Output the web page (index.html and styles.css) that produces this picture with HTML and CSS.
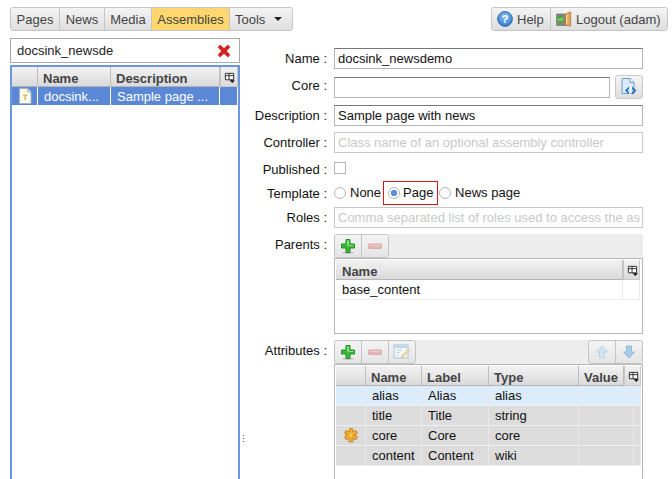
FILE: index.html
```html
<!DOCTYPE html>
<html lang="en">
<head>
<meta charset="utf-8">
<title>Assemblies</title>
<link rel="stylesheet" href="styles.css">
</head>
<body>
<svg class="defs" width="0" height="0" aria-hidden="true">
  <defs>
    <symbol id="plus" viewBox="0 0 16 16">
      <ellipse cx="8" cy="14.800" rx="6" ry="1.100" fill="#c4c4c4"/>
      <path d="M6 1.500h4v4.500h4.500v4H10v4.500H6V10H1.500V6H6z" fill="#3cb83c" stroke="#1f8f2c" stroke-width="1"/>
      <path d="M7 2.500h2v4.500h4.500v1H8v-1H7z" fill="#8fe07f"/>
    </symbol>
    <symbol id="minus" viewBox="0 0 16 16">
      <rect x="1.500" y="6" width="13" height="4.500" rx=".5" fill="#e3b4b6" stroke="#dcaeb0"/>
      <rect x="2.500" y="7" width="11" height="1" fill="#eecdce"/>
    </symbol>
    <symbol id="cols" viewBox="0 0 12 12">
      <path d="M1.500 1.500h9v7h-9zM1.500 4h9M5.500 1.500v7" fill="#fff" stroke="#222" stroke-width="1"/>
      <path d="M6 9h6l-3 3z" fill="#111"/>
    </symbol>
  </defs>
</svg>

<header class="topbar">
  <nav class="btn-group">
    <a class="tb-btn tab-pages">Pages</a>
    <a class="tb-btn tab-news">News</a>
    <a class="tb-btn tab-media">Media</a>
    <a class="tb-btn tab-assemblies active">Assemblies</a>
    <a class="tb-btn tab-tools">Tools <span class="caret"></span></a>
  </nav>
  <div class="btn-group">
    <a class="tb-btn tab-help">
      <svg viewBox="0 0 18 18" width="16" height="16">
        <defs><radialGradient id="helpfill" cx="50%" cy="35%" r="70%"><stop offset="0" stop-color="#8cc4f2"/><stop offset="1" stop-color="#2b74c9"/></radialGradient></defs>
        <circle cx="9" cy="9" r="8.300" fill="url(#helpfill)" stroke="#2364ab"/>
        <text class="qmark" x="9" y="14" text-anchor="middle">?</text>
      </svg>
      Help
    </a>
    <a class="tb-btn tab-logout">
      <svg viewBox="0 0 18 18" width="16" height="16">
        <rect x="1" y="3.500" width="10" height="12.500" fill="#8a8a80" stroke="#66665c"/>
        <path d="M10.500 3.500l6-2.500v16l-6-1z" fill="#e4a65a" stroke="#a86f2c" stroke-width=".8"/>
        <path d="M12 4v11" stroke="#f6d59a" stroke-width="1.500"/>
        <path d="M1 7.500h4V5l4.500 4.500L5 14v-2.500H1z" fill="#6fcf5a" stroke="#2f8f2c" stroke-width=".8"/>
      </svg>
      Logout (adam)
    </a>
  </div>
</header>

<main class="main">
  <aside class="side">
    <div class="search">
      <span class="search-text">docsink_newsde</span>
      <svg class="clear" viewBox="0 0 14 14" width="14" height="14">
        <path d="M1 3.200 3.200 1 7 4.600 10.800 1 13 3.200 9.400 7 13 10.800 10.800 13 7 9.400 3.200 13 1 10.800 4.600 7z" fill="#d8211c" stroke="#a81c16" stroke-width=".6"/>
      </svg>
    </div>
    <div class="list">
      <div class="list-head">
        <div class="hcell c-icon"></div>
        <div class="hcell c-name">Name</div>
        <div class="hcell c-desc">Description</div>
        <div class="hcell c-menu"><svg class="menu-ico"><use href="#cols"/></svg></div>
      </div>
      <div class="list-row">
        <div class="cell c-icon">
          <svg viewBox="0 0 14 16" width="14" height="16">
            <path d="M1.500.5h8l3.500 3.500v11.500h-11.500z" fill="#fbfbee" stroke="#a9b2bd"/>
            <path d="M9.500.5v3.500H13" fill="#e8ecf0" stroke="#a9b2bd"/>
            <path d="M5 6.500h4.500v1.200H8v4.300H6.500V7.700H5z" fill="#c4bd55"/>
          </svg>
        </div>
        <div class="cell c-name">docsink...</div>
        <div class="cell c-desc">Sample page ...</div>
        <div class="cell c-menu"></div>
      </div>
    </div>
  </aside>

  <div class="splitter">⋮</div>

  <form class="form">
    <div class="row r-name">
      <label class="lbl">Name :</label>
      <div class="input">docsink_newsdemo</div>
    </div>
    <div class="row r-core">
      <label class="lbl">Core :</label>
      <div class="input grow"></div>
      <a class="core-btn">
        <svg viewBox="0 0 18 18" width="18" height="18">
          <path d="M2 .5h8l4 4v11H2z" fill="#d9ebfa" stroke="#6f9cc8"/>
          <path d="M10 .5v4h4" fill="#f4f9fd" stroke="#6f9cc8"/>
          <path d="M9 8.500 5 12.500l4 4V14l-1.500-1.500L9 11zM12 8.500l4.500 4-4.500 4V14l1.500-1.500L12 11z" fill="#2472c0"/>
          <path d="M11.500 8.500 9.500 16.500" stroke="#fff" stroke-width="1"/>
        </svg>
      </a>
    </div>
    <div class="row r-desc">
      <label class="lbl">Description :</label>
      <div class="input">Sample page with news</div>
    </div>
    <div class="row r-ctrl">
      <label class="lbl">Controller :</label>
      <div class="input placeholder">Class name of an optional assembly controller</div>
    </div>
    <div class="row r-pub">
      <label class="lbl">Published :</label>
      <span class="check"></span>
    </div>
    <div class="row r-tpl">
      <label class="lbl">Template :</label>
      <div class="radios">
        <span class="radio-item"><span class="radio"></span>None</span>
        <span class="radio-item selected"><span class="radio on"></span>Page</span>
        <span class="radio-item last"><span class="radio"></span>News page</span>
      </div>
    </div>
    <div class="row r-roles">
      <label class="lbl">Roles :</label>
      <div class="input placeholder">Comma separated list of roles used to access the as</div>
    </div>
    <div class="row r-parents">
      <label class="lbl lbl-top">Parents :</label>
      <div class="field">
        <div class="toolbar">
          <div class="icon-group">
            <a class="icon-btn"><svg width="16" height="16"><use href="#plus"/></svg></a>
            <a class="icon-btn"><svg width="16" height="16"><use href="#minus"/></svg></a>
          </div>
        </div>
        <div class="grid grid-parents">
          <div class="grid-head">
            <div class="hcell p-name">Name</div>
            <div class="hcell p-menu"><svg class="menu-ico"><use href="#cols"/></svg></div>
          </div>
          <div class="grid-row plain">
            <div class="cell p-name">base_content</div>
            <div class="cell p-menu"></div>
          </div>
        </div>
      </div>
    </div>
    <div class="row r-attrs">
      <label class="lbl lbl-top">Attributes :</label>
      <div class="field">
        <div class="toolbar between">
          <div class="icon-group">
            <a class="icon-btn"><svg width="16" height="16"><use href="#plus"/></svg></a>
            <a class="icon-btn"><svg width="16" height="16"><use href="#minus"/></svg></a>
            <a class="icon-btn">
              <svg viewBox="0 0 18 18" width="18" height="18">
                <rect x="1" y="2" width="14" height="13" fill="#f2f7fb" stroke="#a9c3da"/>
                <rect x="1.500" y="2.500" width="13" height="2.500" fill="#bfd8ee"/>
                <path d="M3 7h6M3 9.500h4M3 12h3" stroke="#c5d3de"/>
                <path d="M15.500 6 17 7.500 10.500 14 8 15l1-2.500z" fill="#f1d9a4" stroke="#d4b98a" stroke-width=".6"/>
              </svg>
            </a>
          </div>
          <div class="icon-group">
            <a class="icon-btn">
              <svg viewBox="0 0 16 16" width="16" height="16"><path d="M8 2l5.500 6H10.500v6h-5V8H2.500z" fill="#d2e3f1" stroke="#bcd3e6"/></svg>
            </a>
            <a class="icon-btn">
              <svg viewBox="0 0 16 16" width="16" height="16"><path d="M5.500 2h5v6h3L8 14 2.500 8h3z" fill="#a9cbe8" stroke="#93bbdd"/></svg>
            </a>
          </div>
        </div>
        <div class="grid grid-attrs">
          <div class="attr-head">
            <div class="hcell"></div>
            <div class="hcell">Name</div>
            <div class="hcell">Label</div>
            <div class="hcell">Type</div>
            <div class="hcell">Value</div>
            <div class="hcell a-menu"><svg class="menu-ico"><use href="#cols"/></svg></div>
          </div>
          <div class="attr-row hilite">
            <div class="cell"></div><div class="cell">alias</div><div class="cell">Alias</div><div class="cell">alias</div><div class="cell"></div><div class="cell"></div>
          </div>
          <div class="attr-row">
            <div class="cell"></div><div class="cell">title</div><div class="cell">Title</div><div class="cell">string</div><div class="cell"></div><div class="cell"></div>
          </div>
          <div class="attr-row">
            <div class="cell cell-star">
              <svg viewBox="0 0 14 15" width="14" height="15">
                <ellipse cx="7" cy="13.800" rx="4.500" ry="1" fill="#c2c2c2"/>
                <g stroke-linecap="round">
                  <path d="M7 2v10M2.700 4.500l8.600 5M2.700 9.500l8.600-5" stroke="#c97e14" stroke-width="4.400"/>
                  <path d="M7 2v10M2.700 4.500l8.600 5M2.700 9.500l8.600-5" stroke="#f2ab33" stroke-width="3"/>
                </g>
                <circle cx="7" cy="7" r="1.500" fill="#f9d27c"/>
              </svg>
            </div>
            <div class="cell">core</div><div class="cell">Core</div><div class="cell">core</div><div class="cell"></div><div class="cell"></div>
          </div>
          <div class="attr-row">
            <div class="cell"></div><div class="cell">content</div><div class="cell">Content</div><div class="cell">wiki</div><div class="cell"></div><div class="cell"></div>
          </div>
        </div>
      </div>
    </div>
  </form>
</main>
</body>
</html>
```
FILE: styles.css
```css
* { box-sizing: border-box; }
html, body { margin: 0; height: 479px; overflow: hidden; }
body {
  padding: 7px 4px 0 10px;
  background: #fff;
  color: #111;
  font: 13px/15px "Liberation Sans", Arial, sans-serif;
}
.defs { position: absolute; }

.topbar { display: flex; justify-content: space-between; height: 24px; }
.btn-group {
  display: flex;
  border: 1px solid #c4c4c4;
  border-radius: 3px;
  overflow: hidden;
}
.tb-btn {
  display: flex;
  align-items: center;
  justify-content: center;
  color: #444;
  background: linear-gradient(#f4f4f4, #dedede);
  border-left: 1px solid #c4c4c4;
}
.tb-btn:first-child { border-left: 0; }
.tab-pages { width: 48px; }
.tab-news { width: 45px; }
.tab-media { width: 47px; }
.tab-assemblies { width: 78px; }
.tab-tools { width: 63px; justify-content: flex-start; padding-left: 5px; }
.tab-help { width: 58px; gap: 4px; justify-content: flex-start; padding-left: 5px; }
.tab-logout { width: 117px; gap: 4px; justify-content: flex-start; padding-left: 5px; }
.active { background: #ffd76e; }
.caret {
  width: 0; height: 0;
  margin-left: 9px;
  border: 4px solid transparent;
  border-top: 4px solid #222;
  border-bottom: 0;
}
.qmark { font: bold 13px "Liberation Sans", sans-serif; fill: #fff; }

.main { display: flex; margin-top: 7px; }
.side { width: 230px; flex: none; }
.search {
  display: flex;
  align-items: center;
  justify-content: space-between;
  height: 25px;
  padding: 0 8px 0 6px;
  border: 1px solid #aaa;
  color: #222;
}
.list {
  height: 416px;
  margin-top: 2px;
  border: 2px solid #6c96e0;
  border-bottom: 0;
}
.list-head, .list-row { display: grid; grid-template-columns: 26px 73px 109px 18px; }
.list-head { height: 20px; }
.list-row { height: 19px; background: #5b88d6; color: #fff; }

.hcell {
  display: flex;
  align-items: center;
  padding: 3px 0 0 5px;
  background: linear-gradient(#f2f2f2, #dadada);
  border-right: 1px solid #bdbdbd;
  border-bottom: 1px solid #b4b4b4;
  color: #444;
  font-weight: bold;
}
.hcell.p-name { padding-left: 6px; }
.cell {
  display: flex;
  align-items: center;
  padding-left: 6px;
  border-right: 1px solid #e8e8e8;
  white-space: nowrap;
}
.list-row .cell { border-right-color: #fff; border-bottom: 1px solid #fff; }
.hcell.c-menu, .hcell.p-menu, .hcell.a-menu {
  justify-content: center;
  padding: 2px 0 0 1px;
  border-left: 1px solid #c8c8c8;
  border-right-color: #c8c8c8;
  border-bottom-color: #c8c8c8;
}
.menu-ico { width: 11px; height: 11px; }
.list-row .c-icon { justify-content: center; padding: 0; }

.splitter {
  width: 10px;
  flex: none;
  padding-top: 397px;
  font-size: 9px;
  line-height: 9px;
  color: #333;
  text-indent: -1px;
}

.form { width: 393px; padding-top: 10px; }
.row { display: flex; align-items: center; }
.lbl { width: 77px; margin-right: 7px; flex: none; text-align: right; color: #111; padding-bottom: 1px; }
.lbl-top { align-self: flex-start; margin-top: 3px; }
.r-core .lbl { margin-bottom: 3px; }
.r-pub .lbl { margin-top: 3px; }
.r-tpl .lbl { margin-top: 1px; }
.input {
  width: 309px;
  height: 21px;
  padding: 2px 3px;
  border: 1px solid #b5b5b5;
  border-top-color: #777;
  color: #111;
  line-height: 16px;
  white-space: nowrap;
  overflow: hidden;
}
.input.grow { width: 276px; }
.placeholder { color: #c8c8c8; border-color: #c8c8c8; }
.core-btn {
  display: flex;
  align-items: center;
  justify-content: center;
  width: 28px;
  height: 24px;
  margin-left: 5px;
  border: 1px solid #c8c8c8;
  border-radius: 3px;
  background: linear-gradient(#f4f4f4, #dedede);
}
.r-core { margin-top: 6px; height: 24px; }
.r-desc { margin-top: 6px; }
.r-ctrl { margin-top: 6px; }
.r-pub { margin-top: 6px; height: 18px; }
.r-tpl { margin-top: 4px; height: 24px; }
.r-roles { margin-top: 2px; }
.r-parents { margin-top: 6px; align-items: flex-start; height: 100px; }
.r-attrs { margin-top: 6px; align-items: flex-start; }

.check { width: 12px; height: 12px; border: 1px solid #b5b5b5; }
.radios { display: flex; align-items: center; height: 24px; }
.radio-item { display: flex; align-items: center; height: 24px; gap: 4px; padding-bottom: 1px; }
.radio-item.selected { width: 55px; margin-left: 2px; padding-left: 4px; gap: 3px; border: 1px solid #d81818; }
.radio-item.last { margin-left: 1px; }
.radio {
  width: 12px; height: 12px;
  border: 1px solid #b5b5b5;
  border-radius: 50%;
  background: #fff;
}
.radio.on { background: radial-gradient(circle, #5f8fe0 0 3px, #fff 3.500px); }

.field { width: 309px; }
.toolbar { display: flex; height: 24px; background: #ededed; }
.between { justify-content: space-between; }
.icon-group {
  display: flex;
  border: 1px solid #c4c4c4;
  border-radius: 3px;
  overflow: hidden;
}
.icon-btn {
  display: flex;
  align-items: center;
  justify-content: center;
  width: 27px;
  background: linear-gradient(#f4f4f4, #e4e4e4);
  border-left: 1px solid #c4c4c4;
}
.icon-btn:first-child { border-left: 0; width: 26px; }

.grid { border: 1px solid #b5b5b5; padding: 1px; }
.grid-parents { height: 76px; }
.grid-attrs { height: 115px; border-bottom: 0; }
.grid-head { display: grid; grid-template-columns: 287px 17px; height: 20px; }
.grid-row { display: grid; grid-template-columns: 287px 17px; height: 20px; border-bottom: 1px solid #eee; }
.attr-head { display: grid; grid-template-columns: 30px 56px 67px 90px 45px 17px; width: 305px; height: 20px; }
.attr-row {
  display: grid;
  grid-template-columns: 30px 56px 67px 90px 55px 1fr;
  height: 20px;
  background: #dcdcdc;
  border-bottom: 1px solid #f0f0f0;
}
.attr-row.hilite { background: #dcecfb; }
.cell-star { justify-content: center; padding: 0; }
```
